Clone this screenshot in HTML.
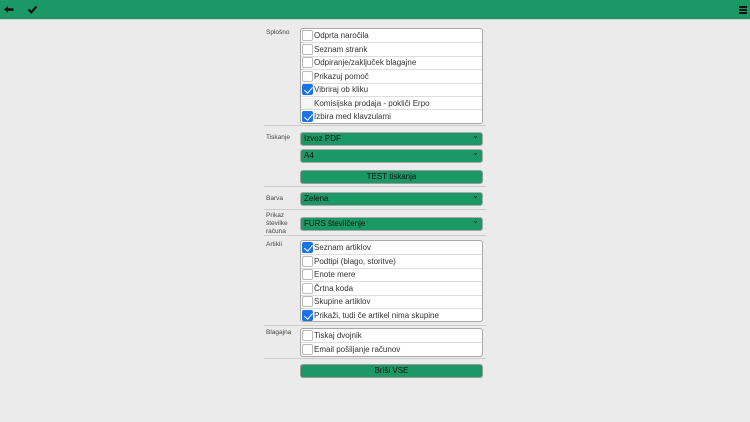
<!DOCTYPE html><html><head><meta charset="utf-8"><style>
*{margin:0;padding:0;box-sizing:border-box}
body{width:750px;height:422px;background:#ebebeb;font-family:"Liberation Sans",sans-serif;position:relative;overflow:hidden}
.hdr{position:absolute;left:0;top:0;width:750px;height:20px;background:#1a9966;border-bottom:1px solid #cfcfcf}
.lbl{position:absolute;left:266px;font-size:6.5px;color:#444;line-height:8px}
.box{position:absolute;left:300px;width:183px;border:1px solid #a8a8a8;border-radius:3px;background:#fff}
.row{height:13.4px;border-top:1px solid #ddd;font-size:8px;color:#333;display:flex;align-items:center;position:relative}
.row:first-child{border-top:none}
.cb{width:11px;height:11px;border:1px solid #bbb;border-radius:2px;background:#fff;margin:0 1px 0 1px;flex:none;position:relative}
.cb.on{background:#1a73e8;border-color:#1a73e8}
.cb.on:after{content:"";position:absolute;left:3px;top:0px;width:3.5px;height:7px;border:solid #fff;border-width:0 1.7px 1.7px 0;transform:rotate(40deg)}
.cb.dis{border-color:#eee;background:#f7f7f7}
.sel{position:absolute;left:300px;width:183px;height:14px;background:#1a9966;border:1px solid #aaa;border-radius:3px;font-size:8px;color:#111;padding-left:3px;line-height:12px}
.sel:after{content:"⌄";position:absolute;right:3px;top:-3px;font-size:8px;color:#222}
.btn{position:absolute;left:300px;width:183px;height:14px;background:#1a9966;border:1px solid #999;border-radius:3px;font-size:8px;color:#111;text-align:center;line-height:12px}
.sep{position:absolute;left:264px;width:222px;height:1px;background:#ccc}
</style></head><body>
<div class="hdr">
<svg style="position:absolute;left:3px;top:5px" width="11" height="9" viewBox="0 0 11 9"><path d="M1 4.5L5 1V3.3H10.5V5.7H5V8Z" fill="#111"/></svg>
<svg style="position:absolute;left:27px;top:5px" width="11" height="9" viewBox="0 0 11 9"><path d="M1.5 4.5L4.3 7.3L9.5 1.5" stroke="#111" stroke-width="2.2" fill="none"/></svg>
<div style="position:absolute;left:739px;top:6px;width:8px;height:2px;background:#111;box-shadow:0 3px 0 #111,0 6px 0 #111"></div>
</div>
<div class="lbl" style="top:29px">Splošno</div>
<div class="box" style="top:28px">
<div class="row"><span class="cb"></span>Odprta naročila</div>
<div class="row"><span class="cb"></span>Seznam strank</div>
<div class="row"><span class="cb"></span>Odpiranje/zaključek blagajne</div>
<div class="row"><span class="cb"></span>Prikazuj pomoč</div>
<div class="row"><span class="cb on"></span>Vibriraj ob kliku</div>
<div class="row"><span class="cb dis"></span>Komisijska prodaja - pokliči Erpo</div>
<div class="row"><span class="cb on"></span>Izbira med klavzulami</div>
</div>
<div class="sep" style="top:125px"></div>
<div class="lbl" style="top:134px">Tiskanje</div>
<div class="sel" style="top:132px">Izvoz PDF</div>
<div class="sel" style="top:149px">A4</div>
<div class="btn" style="top:170px">TEST tiskanja</div>
<div class="sep" style="top:186px"></div>
<div class="lbl" style="top:195px">Barva</div>
<div class="sel" style="top:192px">Zelena</div>
<div class="sep" style="top:209px"></div>
<div class="lbl" style="top:212px">Prikaz<br>številke<br>računa</div>
<div class="sel" style="top:217px">FURS številčenje</div>
<div class="sep" style="top:235px"></div>
<div class="lbl" style="top:241px">Artikli</div>
<div class="box" style="top:240px">
<div class="row"><span class="cb on"></span>Seznam artiklov</div>
<div class="row"><span class="cb"></span>Podtipi (blago, storitve)</div>
<div class="row"><span class="cb"></span>Enote mere</div>
<div class="row"><span class="cb"></span>Črtna koda</div>
<div class="row"><span class="cb"></span>Skupine artiklov</div>
<div class="row"><span class="cb on"></span>Prikaži, tudi če artikel nima skupine</div>
</div>
<div class="sep" style="top:325px"></div>
<div class="lbl" style="top:329px">Blagajna</div>
<div class="box" style="top:328px">
<div class="row"><span class="cb"></span>Tiskaj dvojnik</div>
<div class="row"><span class="cb"></span>Email pošiljanje računov</div>
</div>
<div class="sep" style="top:358px"></div>
<div class="btn" style="top:364px">Briši VSE</div>
</body></html>
